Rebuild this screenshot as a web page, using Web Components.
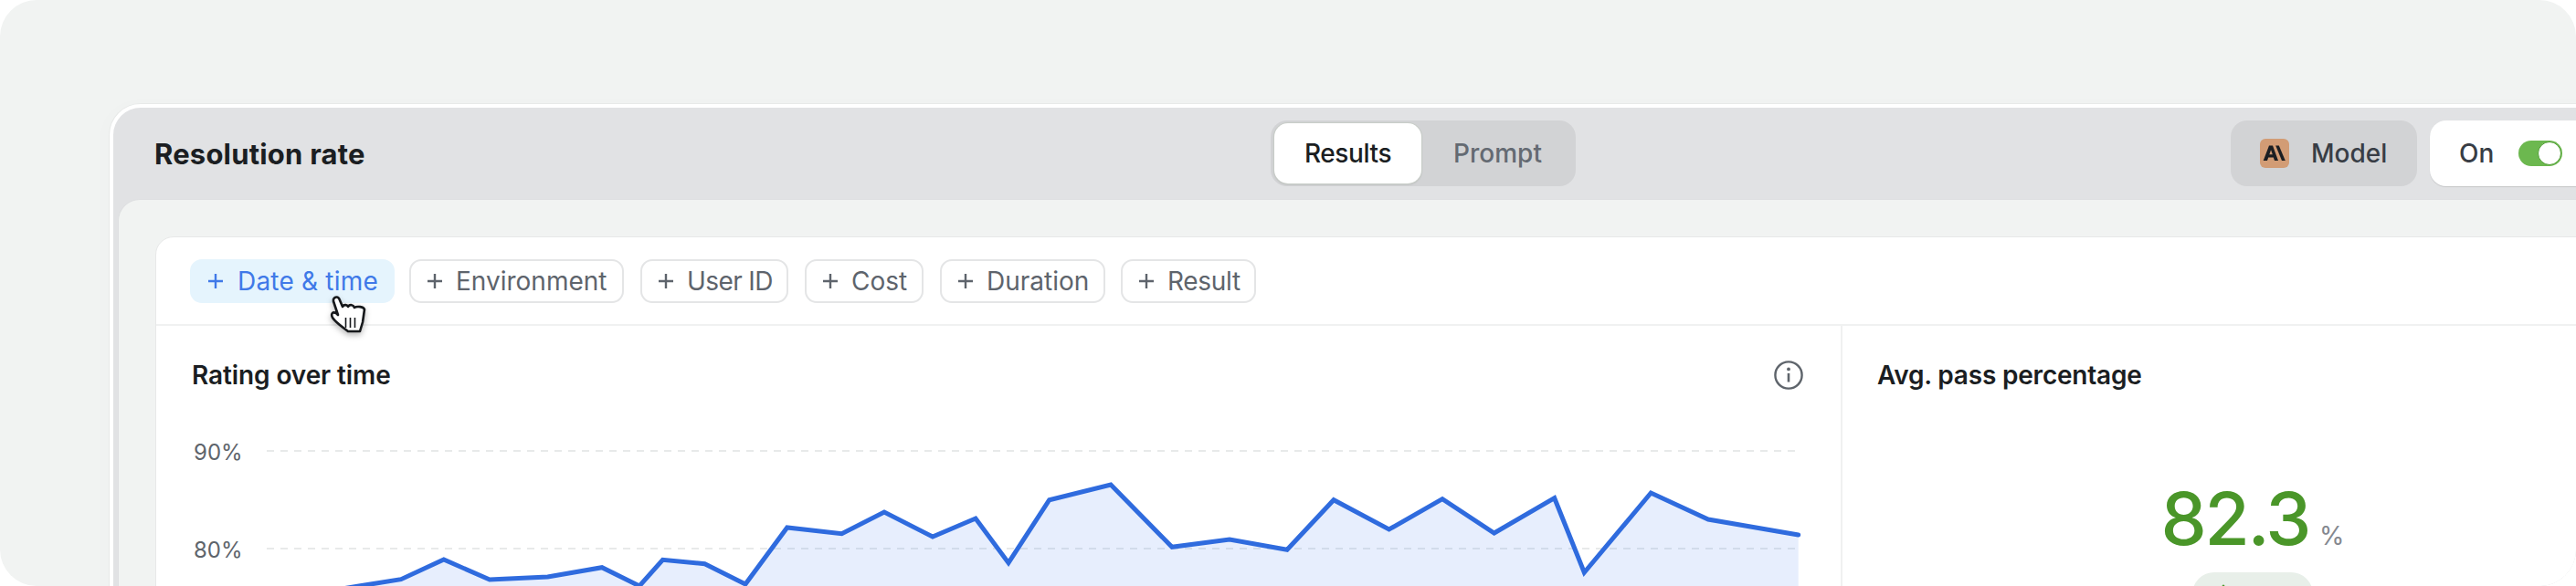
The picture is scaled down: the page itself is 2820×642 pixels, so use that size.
<!DOCTYPE html>
<html>
<head>
<meta charset="utf-8">
<title>Resolution rate</title>
<style>
html, body { margin: 0; background: #fff; overflow: hidden; }
body { width: 2820px; height: 642px; font-family: Inter, "Liberation Sans", sans-serif; }
</style>
</head>
<body>
<app-frame>
  <app-window>
    <window-header slot="header" title-text="Resolution rate"></window-header>
    <filter-chip slot="filters" style="width:224px;gap:15px;letter-spacing:.2px" active>Date &amp; time</filter-chip>
    <filter-chip slot="filters" style="width:235px;margin-left:-2px">Environment</filter-chip>
    <filter-chip slot="filters" style="width:162px;letter-spacing:-.6px">User ID</filter-chip>
    <filter-chip slot="filters" style="width:130px">Cost</filter-chip>
    <filter-chip slot="filters" style="width:181px">Duration</filter-chip>
    <filter-chip slot="filters" style="width:148px;margin-left:-1px;letter-spacing:-.3px">Result</filter-chip>
    <rating-chart slot="chart"></rating-chart>
    <pass-stat slot="stat"></pass-stat>
  </app-window>
  <hand-cursor slot="overlay"></hand-cursor>
</app-frame>

<script>
function makeTemplate(html) {
  const t = document.createElement('template');
  t.innerHTML = html;
  return t;
}

class Base extends HTMLElement {
  constructor() {
    super();
    this._shadowRoot = this.attachShadow({ mode: 'open' });
    this._shadowRoot.appendChild(this.constructor.template.content.cloneNode(true));
  }
}

class AppFrame extends Base {
  static template = makeTemplate(`
<style>
:host { display: block; position: relative; height: 642px; box-sizing: border-box; padding: 114px 0 0 120px;
  background: #f1f3f2; border-radius: 40px; overflow: hidden; }
</style>
<slot></slot>
<slot name="overlay"></slot>`);
}

class AppWindow extends Base {
  static template = makeTemplate(`
<style>
:host { display: block; width: 2868px; height: 640px; background: #e1e2e4; border: 4px solid #fff;
  border-radius: 34px; box-shadow: 0 0 0 1px #e7e9e8, -6px 0 24px rgba(0,0,0,.012); }
.panel { margin-left: 5px; height: 100%; box-sizing: border-box; background: #f1f3f2; padding: 40px 0 0 40px;
  border: 1px solid #dedfe1; border-right: 0; border-radius: 24px 0 0 0; }
.card { width: 2747px; box-sizing: border-box; background: #fff; border: 1px solid #e7e8e8; border-radius: 20px; height: 500px; }
.filters { display: flex; gap: 18px; height: 97px; align-items: center; box-sizing: border-box; padding-left: 37px;
  border-bottom: 2px solid #f0f1f1; }
.body { display: flex; }
</style>
<slot name="header"></slot>
<div class="panel">
  <div class="card">
    <div class="filters"><slot name="filters"></slot></div>
    <div class="body">
      <slot name="chart"></slot>
      <slot name="stat"></slot>
    </div>
  </div>
</div>`);
}

class WindowHeader extends Base {
  static template = makeTemplate(`
<style>
:host { display: grid; grid-template-columns: 1fr auto 1fr; align-items: center; height: 100px; padding: 0 45px; box-sizing: border-box; }
h1 { margin: 0; font-size: 31px; font-weight: 700; color: #1b1e22; letter-spacing: .2px; }
.actions { display: flex; gap: 14px; margin-left: 717px; }
</style>
<h1></h1>
<segment-tabs></segment-tabs>
<div class="actions">
  <model-button></model-button>
  <toggle-card></toggle-card>
</div>`);
  connectedCallback() {
    this._shadowRoot.querySelector('h1').textContent = this.getAttribute('title-text');
  }
}

class SegmentTabs extends Base {
  static template = makeTemplate(`
<style>
:host { display: flex; width: 334px; height: 72px; box-sizing: border-box; padding: 3px 4px; background: #d2d3d5; border-radius: 18px; font-size: 28px; font-weight: 500; }
.tab { display: flex; align-items: center; justify-content: center; box-sizing: border-box; height: 66px; border-radius: 15px; }
.on { width: 161px; background: #fff; color: #1b1e22; letter-spacing: -.4px; box-shadow: 0 0 0 1px #c8cdc8, 0 1px 2px rgba(90,100,90,.35); }
.off { flex: 1; color: #646a72; padding-left: 2px; }
</style>
<div class="tab on">Results</div>
<div class="tab off">Prompt</div>`);
}

class ModelButton extends Base {
  static template = makeTemplate(`
<style>
:host { display: flex; align-items: center; gap: 24px; width: 204px; height: 72px; box-sizing: border-box; padding-left: 32px; background: #d2d3d5;
  border-radius: 18px; color: #383d45; font-size: 28px; font-weight: 500; }
svg { display: block; }
</style>
<svg width="32" height="32" viewBox="0 0 32 32">
  <rect width="32" height="32" rx="6" fill="#d29c75"/>
  <path fill="#1b1e22" fill-rule="evenodd" d="M3.7 24 L10 7.5 H14 L20 24 H16 L14.8 20.6 H9.2 L8 24 Z M10.3 17.3 H13.8 L12.05 12.2 Z"/>
  <path fill="#1b1e22" d="M17.2 7.5 H20.8 L27.8 24 H24 Z"/>
</svg>
<span>Model</span>`);
}

class ToggleCard extends Base {
  static template = makeTemplate(`
<style>
:host { display: flex; align-items: center; gap: 27px; width: 240px; height: 72px; box-sizing: border-box; padding-left: 32px; background: #fff;
  border-radius: 18px; color: #383d45; font-size: 28px; font-weight: 500; box-shadow: 0 1px 1px rgba(0,0,0,.12); }
.track { display: flex; justify-content: flex-end; align-items: center; width: 48px; height: 28px; box-sizing: border-box; padding-right: 1px; background: #6cb84f; border-radius: 14px; }
.knob { width: 26px; height: 26px; box-sizing: border-box; background: #fff; border: 1px solid #4f9d33; border-radius: 50%; }
</style>
<span>On</span>
<div class="track"><div class="knob"></div></div>`);
}

class FilterChip extends Base {
  static template = makeTemplate(`
<style>
:host { display: inline-flex; align-items: center; gap: 14px; height: 48px; box-sizing: border-box; padding: 1px 0 0 17px; border: 2px solid #e4e5e6; border-radius: 13px;
  color: #5e646c; font-size: 28px; font-weight: 400; white-space: nowrap; }
:host([active]) { background: #e5f4fd; border-color: #e5f4fd; color: #4079e8; }
svg { display: block; flex: none; margin-top: -1px; }
</style>
<svg width="18" height="18" viewBox="0 0 18 18"><path d="M9 1 V17 M1 9 H17" fill="none" stroke="currentColor" stroke-width="2.4"/></svg>
<slot></slot>`);
}

const LINE = [[350,649],[393,642],[439,634.7],[485.8,613],[536,635],[599.6,632],[659,621.7],[700,642],[725.5,613.3],[771.5,617.7],[816,640],[861.7,578],[880,580],[921.5,584.7],[968,561],[1021,588],[1068,568],[1104,616.7],[1148.7,547.7],[1216,531],[1283,599.3],[1346,591],[1409,602.3],[1460,547.7],[1520.6,580],[1579,546.7],[1635.7,584],[1701.7,545.7],[1734.3,627.3],[1807.3,540],[1870,569],[1968.7,586]];
const linePts = LINE.map(p => p.join(',')).join(' ');

class RatingChart extends Base {
  static template = makeTemplate(`
<style>
:host { display: block; width: 1846px; height: 300px; box-sizing: border-box; border-right: 2px solid #f0f1f1; }
header { display: flex; justify-content: space-between; align-items: center; height: 32px; padding: 38px 41px 0 39px; }
h2 { margin: 0; font-size: 28px; font-weight: 600; color: #1b1e22; letter-spacing: -.1px; }
svg.plot { display: block; margin-top: 13px; }
svg.plot text { font-family: Inter, "Liberation Sans", sans-serif; font-size: 24px; fill: #5e646b; }
</style>
<header>
  <h2>Rating over time</h2>
  <svg width="32" height="32" viewBox="0 0 32 32" fill="none" stroke="#5e646b">
    <circle cx="16" cy="16" r="14.6" stroke-width="2.4"/>
    <path d="M16 14 V23.5" stroke-width="2.6"/>
    <circle cx="16" cy="9.4" r="1.9" fill="#5e646b" stroke="none"/>
  </svg>
</header>
<svg class="plot" width="1842" height="202" viewBox="171 440 1842 202">
  <text x="212" y="504">90%</text>
  <text x="212" y="611">80%</text>
  <path class="grid" d="M292 494 H1970 M292 601 H1970" stroke="#e8eaea" stroke-width="2" stroke-dasharray="8 7" fill="none"/>
  <polygon fill="#2d6df0" fill-opacity=".115" points="350,660 ${linePts} 1968.7,660"/>
  <polyline fill="none" stroke="#2f6bde" stroke-width="5" stroke-linejoin="miter" stroke-linecap="round" points="${linePts}"/>
</svg>`);
}

class PassStat extends Base {
  static template = makeTemplate(`
<style>
:host { display: block; width: 898px; box-sizing: border-box; padding: 38px 38px 0; }
h2 { margin: 0; font-size: 28px; font-weight: 600; line-height: 32px; color: #1b1e22; letter-spacing: -.2px; }
.center { display: flex; flex-direction: column; align-items: center; margin-top: 100px; }
.num { display: flex; align-items: baseline; gap: 11px; height: 82px; line-height: 82px; }
.val { font-size: 80px; font-weight: 500; color: #4a9629; letter-spacing: -2.4px; }
.unit { font-size: 28px; color: #85888f; }
.pill { display: flex; justify-content: center; width: 132px; height: 60px; margin-top: 18px; padding-top: 13px; box-sizing: border-box; background: #e8efe9; border-radius: 24px; }
.pill svg { margin-left: -64px; }
</style>
<h2>Avg. pass percentage</h2>
<div class="center">
  <div class="num"><span class="val">82.3</span><span class="unit">%</span></div>
  <div class="pill"><svg width="20" height="20" viewBox="0 0 20 20"><path d="M10 18 V2 M3 9 L10 2 L17 9" fill="none" stroke="#4a9629" stroke-width="2.4"/></svg></div>
</div>`);
}

class HandCursor extends Base {
  static template = makeTemplate(`
<style>
:host { position: absolute; left: 340px; top: 310px; width: 70px; height: 66px; display: block; }
svg { display: block; filter: drop-shadow(0 3px 3px rgba(0,0,0,.28)); }
</style>
<svg width="70" height="66" viewBox="0 0 70 66">
  <path fill="#fff" stroke="#16181b" stroke-width="2.6" stroke-linejoin="round"
    d="M25 18 C27 14 31 15 32 19 L35 26 C37 23 40 24 41 26 C43 23 47 24 48 27 C51 25 58 26 59 29 L57 43 L54 53 L41 53 C36 49 28 44 24 38 C22 34 24 31 28 33 L30 35 L25 20 Z"/>
  <path fill="none" stroke="#16181b" stroke-width="1.6" d="M38.5 38 V49 M43.5 38 V49 M48.5 38 V49"/>
</svg>`);
}

customElements.define('app-frame', AppFrame);
customElements.define('app-window', AppWindow);
customElements.define('window-header', WindowHeader);
customElements.define('segment-tabs', SegmentTabs);
customElements.define('model-button', ModelButton);
customElements.define('toggle-card', ToggleCard);
customElements.define('filter-chip', FilterChip);
customElements.define('rating-chart', RatingChart);
customElements.define('pass-stat', PassStat);
customElements.define('hand-cursor', HandCursor);
</script>
</body>
</html>
